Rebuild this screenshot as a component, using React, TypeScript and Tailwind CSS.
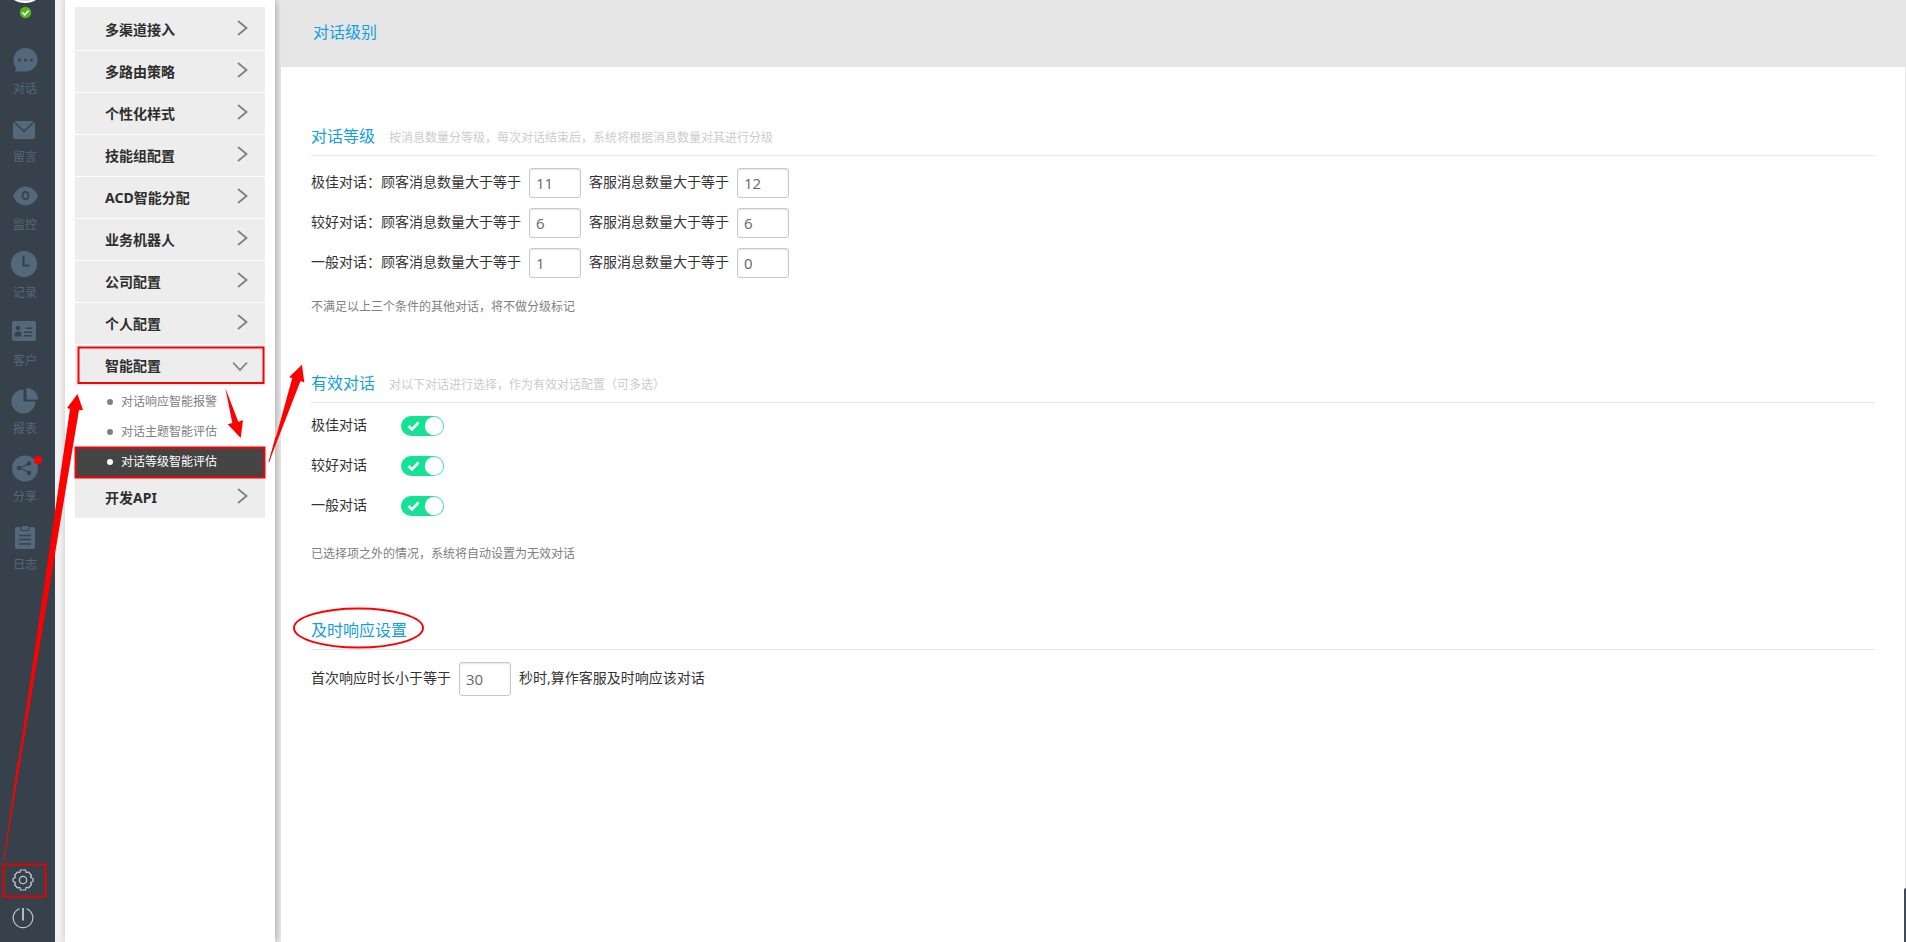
import { useState } from 'react';
import type { ReactNode } from 'react';

const railItems: { label: string; icon: ReactNode; dot?: boolean }[] = [
  {
    label: '对话',
    icon: (
      <>
        <path d="M14.5 2C21 2 26.500 7.300 26.500 14C26.500 20.500 21 25.500 14.500 25.500H3.500C4.800 24.500 5.200 23.500 4.800 21.500C3.300 19.500 2.500 17 2.500 14C2.500 7.300 8 2 14.500 2Z" />
        <g fill="#37414b">
          <circle cx="8.500" cy="14" r="1.500" />
          <circle cx="14.500" cy="14" r="1.500" />
          <circle cx="20.500" cy="14" r="1.500" />
        </g>
      </>
    ),
  },
  {
    label: '留言',
    icon: (
      <>
        <rect x="2" y="7" width="22" height="18" rx="2" />
        <path d="M2.500 7.500L13 17.500L23.500 7.500" fill="none" stroke="#37414b" strokeWidth="1.500" />
      </>
    ),
  },
  {
    label: '监控',
    icon: (
      <>
        <path d="M2 14C5 8 9 4.500 14.500 4.500C20 4.500 24 8 27 14C24 20 20 23.500 14.500 23.500C9 23.500 5 20 2 14Z" />
        <ellipse cx="14.500" cy="13.500" rx="3" ry="3.700" fill="none" stroke="#37414b" strokeWidth="1.800" />
      </>
    ),
  },
  {
    label: '记录',
    icon: (
      <>
        <circle cx="13" cy="14" r="13" />
        <path d="M12.500 6V15.500H18.500" fill="none" stroke="#37414b" strokeWidth="2" />
      </>
    ),
  },
  {
    label: '客户',
    icon: (
      <>
        <rect x="1" y="3" width="24" height="20" rx="2" />
        <g fill="#37414b">
          <circle cx="7" cy="10" r="2.200" />
          <path d="M3.500 18.500V16C3.500 14 5 13.500 7 13.500C9 13.500 10.500 14 10.500 16V18.500Z" />
          <rect x="15" y="9.500" width="6" height="1.500" />
          <rect x="13" y="13.500" width="8" height="1.500" />
          <rect x="13" y="17" width="8" height="1.500" />
        </g>
      </>
    ),
  },
  {
    label: '报表',
    icon: (
      <>
        <path d="M12.500 3.500V15.500H24.500A12 12 0 1 1 12.500 3.500Z" />
        <path d="M15.500 2A11.500 11.500 0 0 1 27 13.500H15.500Z" />
      </>
    ),
  },
  {
    label: '分享',
    dot: true,
    icon: (
      <>
        <circle cx="14" cy="14.500" r="13" />
        <path d="M18.500 9.500L8.500 14L18.500 18.500" fill="none" stroke="#37414b" strokeWidth="1.200" />
        <g fill="#37414b">
          <circle cx="18" cy="9.500" r="2.200" />
          <circle cx="8" cy="14" r="2.200" />
          <circle cx="18" cy="19" r="2.200" />
        </g>
      </>
    ),
  },
  {
    label: '日志',
    icon: (
      <>
        <rect x="4" y="5" width="20" height="22" rx="2" />
        <rect x="10" y="3.500" width="8" height="5" rx="1.500" stroke="#37414b" strokeWidth="1.200" />
        <path d="M8 13.500H20M8 17.500H20M8 22H20" stroke="#37414b" strokeWidth="1.300" />
      </>
    ),
  },
];

const menu = ['多渠道接入', '多路由策略', '个性化样式', '技能组配置', 'ACD智能分配', '业务机器人', '公司配置', '个人配置'];
const subMenu = ['对话响应智能报警', '对话主题智能评估', '对话等级智能评估'];

const levels = [
  { name: '极佳对话', customer: '11', agent: '12' },
  { name: '较好对话', customer: '6', agent: '6' },
  { name: '一般对话', customer: '1', agent: '0' },
];

function MenuButton({ label, open }: { label: string; open?: boolean }) {
  return (
    <button
      type="button"
      aria-expanded={!!open}
      className="flex h-[41px] w-full items-center justify-between bg-[#ededed] pl-[30px] pr-4 text-left text-sm font-bold text-[#2e2e2e]"
    >
      {label}
      <svg className="mb-1 h-4 w-4" viewBox="0 0 16 16" fill="none" stroke="#808080" strokeWidth="1.800">
        {open ? <path d="M0 6.500L7 14L14 6.500" /> : <path d="M5 1L13.500 8L5 15" />}
      </svg>
    </button>
  );
}

function NumberBox({ value, label, tall }: { value: string; label: string; tall?: boolean }) {
  return (
    <input
      type="text"
      aria-label={label}
      defaultValue={value}
      className={`w-[52px] rounded-[3px] border border-[#c8c8c8] bg-white pl-1.5 font-['Open_Sans',sans-serif] text-[15px] text-[#666] shadow-[inset_0_1px_2px_rgba(0,0,0,0.1)] ${tall ? 'h-[34px]' : 'h-[30px]'}`}
    />
  );
}

function Toggle({ id }: { id: string }) {
  const [on, setOn] = useState(true);
  return (
    <span className="relative flex h-5 w-[43px]">
      <input
        id={id}
        type="checkbox"
        checked={on}
        onChange={() => setOn(!on)}
        className="h-5 w-[43px] cursor-pointer appearance-none rounded-full bg-[#ccc] checked:bg-[#15e297]"
      />
      <svg className="pointer-events-none absolute inset-0" viewBox="0 0 43 20" fill="none">
        {on && <path d="M7.500 10L11 13.500L17.500 6.500" stroke="#fff" strokeWidth="2.600" />}
        <circle cx={on ? 33 : 10} cy="10" r="9.200" fill="#fff" />
      </svg>
    </span>
  );
}

function Section({ title, hint, children }: { title: string; hint?: string; children: ReactNode }) {
  return (
    <section className="min-h-[247px]">
      <div className="flex h-9 items-center border-b border-[#e6e6e6] pb-1">
        <h2 className="text-base leading-6 text-[#14a0dc]">{title}</h2>
        {hint && <p className="ml-3.5 pt-1 text-xs text-[#ccc]">{hint}</p>}
      </div>
      {children}
    </section>
  );
}

function Annotations() {
  return (
    <svg className="pointer-events-none absolute left-0 top-0 z-20" width="440" height="940" viewBox="0 0 440 940">
      <g fill="#f00">
        <path d="M4 860L70 409L67 408L77.500 394L83 410L79 410Z" />
        <path d="M225.300 388L232.300 423L227.700 424.300L240.700 438L243 420.300L238.300 421.700Z" />
        <path d="M269 462L292.300 378L289 377.300L302 364.700L304.300 382.500L300.500 381Z" />
        <path d="M4 860L18 762" stroke="#f00" />
        <path d="M269 462L276 437" stroke="#f00" />
      </g>
      <g fill="none" stroke="#f00" strokeWidth="2">
        <rect x="78.500" y="347.500" width="185" height="35.500" />
        <rect x="75.500" y="447.500" width="189" height="30" />
        <rect x="3.500" y="864.500" width="42" height="32" stroke="#e60000" />
        <ellipse cx="358.500" cy="628" rx="64.500" ry="19.500" strokeWidth="1.900" />
      </g>
    </svg>
  );
}

export default function App() {
  return (
    <div className="relative flex min-h-screen overflow-hidden bg-[#f1f1f1] font-['Noto_Sans','Noto_Sans_CJK_SC',sans-serif]">
      {/* Icon rail */}
      <nav className="flex w-[55px] shrink-0 flex-col bg-[#37414b] pr-[5px]">
        <div className="flex h-[31px] justify-center">
          <svg width="50" height="31" viewBox="0 0 50 31">
            <ellipse cx="25" cy="-8" rx="16" ry="11" fill="#fff" />
            <ellipse cx="25" cy="-8" rx="14" ry="9" fill="#d8c8bc" />
            <circle cx="25.500" cy="12.500" r="5.700" fill="#58b41c" />
            <path d="M22.500 12.500L24.800 14.800L28.700 10.500" fill="none" stroke="#fff" strokeWidth="1.600" />
          </svg>
        </div>
        {railItems.map((item) => (
          <a key={item.label} href="#" className="flex h-[68px] flex-col items-center justify-end text-[#54687c]">
            <span className="relative mb-[5px]">
              <svg width="28" height="28" viewBox="0 0 28 28" fill="#54687c">
                {item.icon}
              </svg>
              {item.dot && <span className="absolute -right-[3px] top-0.5 h-2 w-2 rounded-full bg-[#f00]" />}
            </span>
            <span className="text-xs leading-5">{item.label}</span>
          </a>
        ))}
        <div className="mt-auto flex flex-col items-center gap-4 pb-[13px] pr-1">
          <button type="button" aria-label="设置">
            <svg width="22" height="22" viewBox="0 0 22 22" fill="none" stroke="#c3c9ce" strokeWidth="1.200">
              <path d="M8.500 1H13.500L14.200 3.500L16.500 3L19.500 6.500L18.500 8.500L21 9.500V12.500L18.500 13.500L19.500 15.500L16.500 19L14.200 18.300L13.500 21H8.500L7.800 18.300L5.500 19L2.500 15.500L3.500 13.500L1 12.500V9.500L3.500 8.500L2.500 6.500L5.500 3L7.800 3.500Z" strokeLinejoin="round" />
              <circle cx="11" cy="11" r="3.700" />
            </svg>
          </button>
          <button type="button" aria-label="退出">
            <svg width="22" height="22" viewBox="0 0 22 22" fill="none" stroke="#c3c9ce" strokeWidth="1.200">
              <path d="M7.500 1.700A9.800 9.800 0 1 0 14.500 1.700" />
              <path d="M11 1V13.500" strokeWidth="1.800" />
            </svg>
          </button>
        </div>
      </nav>

      {/* Settings menu */}
      <aside className="ml-2.5 w-[210px] shrink-0 bg-white px-2.5 pt-[7px] shadow-[2px_0_8px_rgba(0,0,0,0.3)]">
        <ul className="flex flex-col gap-px border-t-2 border-[#ededed]">
          {menu.map((label) => (
            <li key={label}>
              <MenuButton label={label} />
            </li>
          ))}
          <li>
            <MenuButton label="智能配置" open />
            <ul className="-mb-px pt-px">
              {subMenu.map((label, i) => {
                const active = i === subMenu.length - 1;
                return (
                  <li key={label}>
                    <a
                      href="#"
                      className={`flex h-[30px] items-center gap-2 pl-8 text-xs ${active ? 'bg-[#444] text-white' : 'text-[#808080]'}`}
                    >
                      <span className={`h-1.5 w-1.5 rounded-full ${active ? 'bg-white' : 'bg-[#808080]'}`} />
                      {label}
                    </a>
                  </li>
                );
              })}
            </ul>
          </li>
          <li>
            <MenuButton label="开发API" />
          </li>
        </ul>
      </aside>

      {/* Content */}
      <main className="z-10 ml-1.5 min-w-0 flex-1 border-r border-[#e6e6e6] bg-white">
        <header className="h-[67px] bg-[#e6e6e6] pl-8 pt-5">
          <h1 className="text-base text-[#14a0dc]">对话级别</h1>
        </header>
        <div className="pl-[30px] pr-[30px] pt-[53px] text-sm text-[#333]">
          <Section title="对话等级" hint="按消息数量分等级，每次对话结束后，系统将根据消息数量对其进行分级">
            <div className="pt-[7px]">
              {levels.map((level) => (
                <div key={level.name} className="flex h-10 items-center">
                  <span className="pb-0.5">{level.name}：</span>
                  <span className="mr-2 pb-0.5">顾客消息数量大于等于</span>
                  <NumberBox value={level.customer} label={`${level.name}顾客消息数量`} />
                  <span className="mx-2 pb-0.5">客服消息数量大于等于</span>
                  <NumberBox value={level.agent} label={`${level.name}客服消息数量`} />
                </div>
              ))}
            </div>
            <p className="mt-3 text-xs leading-6 text-[#808080]">不满足以上三个条件的其他对话，将不做分级标记</p>
          </Section>

          <Section title="有效对话" hint="对以下对话进行选择，作为有效对话配置（可多选）">
            <div className="pt-[3px]">
              {levels.map((level, i) => (
                <div key={level.name} className="flex h-10 items-center">
                  <label htmlFor={`valid-${i}`} className="w-[90px] pb-0.5">
                    {level.name}
                  </label>
                  <Toggle id={`valid-${i}`} />
                </div>
              ))}
            </div>
            <p className="mt-4 text-xs leading-6 text-[#808080]">已选择项之外的情况，系统将自动设置为无效对话</p>
          </Section>

          <Section title="及时响应设置">
            <div className="flex items-center pt-3">
              <span className="mr-2 pb-0.5">首次响应时长小于等于</span>
              <NumberBox value="30" label="首次响应时长" tall />
              <span className="ml-2 pb-0.5">秒时,算作客服及时响应该对话</span>
            </div>
          </Section>
        </div>
      </main>

      <div className="absolute bottom-0 right-0 z-20 h-[54px] w-0.5 rounded-tl bg-[#434b5a]" />
      <Annotations />
    </div>
  );
}
